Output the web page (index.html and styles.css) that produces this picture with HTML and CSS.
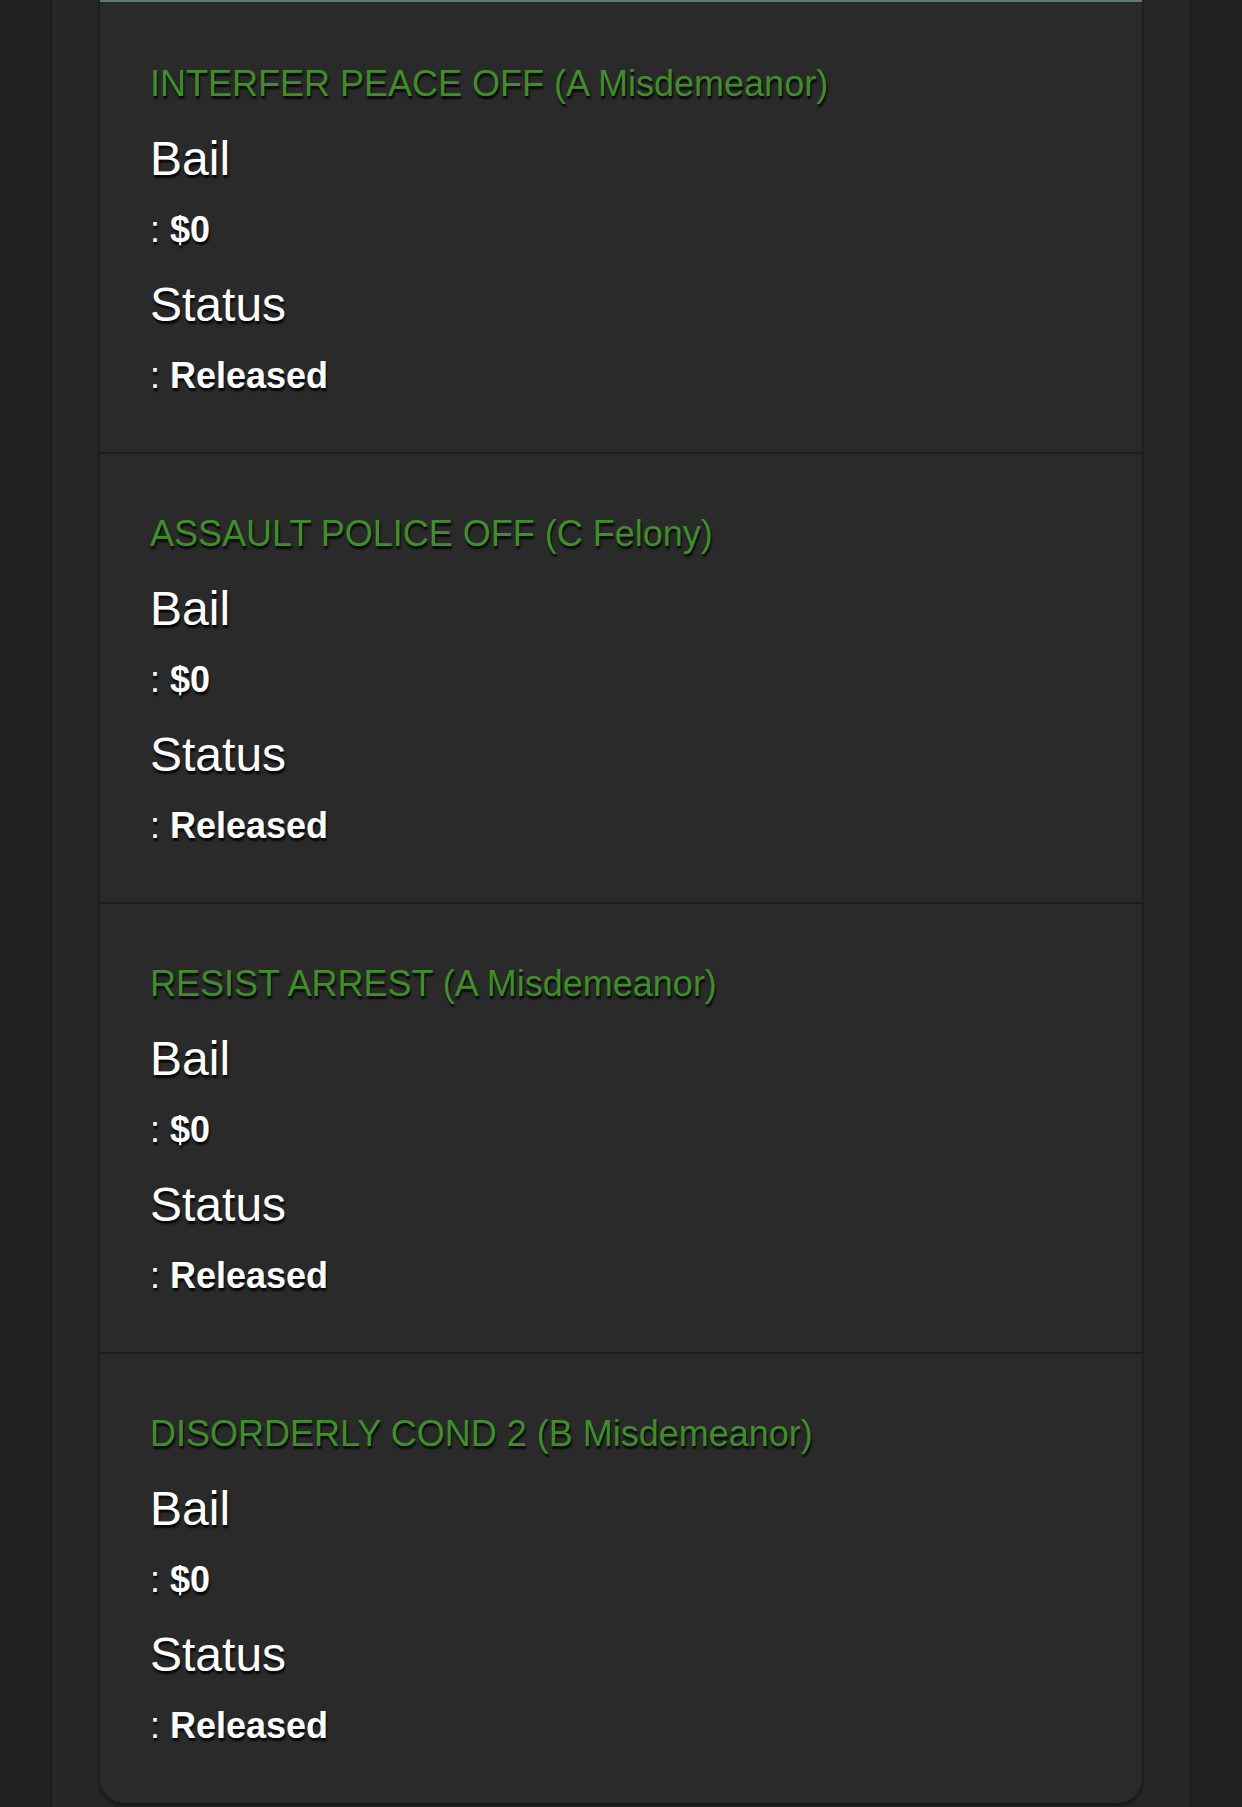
FILE: index.html
```html
<!DOCTYPE html>
<html>
<head>
<meta charset="utf-8">
<link rel="stylesheet" href="styles.css">
</head>
<body>
<div class="page">
  <div class="panel">
    <div class="card">
      <div class="charge">
        <div class="title">INTERFER PEACE OFF (A Misdemeanor)</div>
        <div class="label">Bail</div>
        <div class="value">: <b>$0</b></div>
        <div class="label">Status</div>
        <div class="value">: <b>Released</b></div>
      </div>
      <div class="charge">
        <div class="title">ASSAULT POLICE OFF (C Felony)</div>
        <div class="label">Bail</div>
        <div class="value">: <b>$0</b></div>
        <div class="label">Status</div>
        <div class="value">: <b>Released</b></div>
      </div>
      <div class="charge">
        <div class="title">RESIST ARREST (A Misdemeanor)</div>
        <div class="label">Bail</div>
        <div class="value">: <b>$0</b></div>
        <div class="label">Status</div>
        <div class="value">: <b>Released</b></div>
      </div>
      <div class="charge">
        <div class="title">DISORDERLY COND 2 (B Misdemeanor)</div>
        <div class="label">Bail</div>
        <div class="value">: <b>$0</b></div>
        <div class="label">Status</div>
        <div class="value">: <b>Released</b></div>
      </div>
    </div>
  </div>
</div>
</body>
</html>
```

FILE: styles.css
```css
html, body {
  margin: 0;
  padding: 0;
  background: #222222;
  font-family: "Liberation Sans", Arial, Helvetica, sans-serif;
}

.page {
  padding: 0 50px;
  min-height: 1807px;
  box-sizing: border-box;
  display: flex;
}

.panel {
  flex: 1;
  background: #262626;
  border-left: 2px solid #1d1d1d;
  border-right: 2px solid #1d1d1d;
  padding: 0 48px 7px;
}

.card {
  background: #2a2a2a;
  border-top: 2px solid #5f7d6d;
  border-radius: 0 0 24px 24px;
  box-shadow: 0 2px 5px rgba(0, 0, 0, 0.55);
  padding-top: 2px;
}

.charge {
  padding: 53px 48px 49px 50px;
  border-bottom: 2px solid #1e1e1e;
}

.charge:last-child {
  border-bottom: none;
  padding-bottom: 50px;
}

.title {
  font-size: 36px;
  line-height: 54px;
  color: #3f8e28;
  text-shadow: 1px 3px 2px rgba(0, 0, 0, 0.85);
}

.label {
  font-size: 48px;
  line-height: 72px;
  margin-top: 12px;
  color: #ffffff;
  text-shadow: 1px 3px 2px rgba(0, 0, 0, 0.85);
}

.value {
  font-size: 36px;
  line-height: 54px;
  margin-top: 8px;
  color: #ffffff;
  text-shadow: 1px 3px 2px rgba(0, 0, 0, 0.85);
}

.value b {
  font-weight: bold;
}
```
